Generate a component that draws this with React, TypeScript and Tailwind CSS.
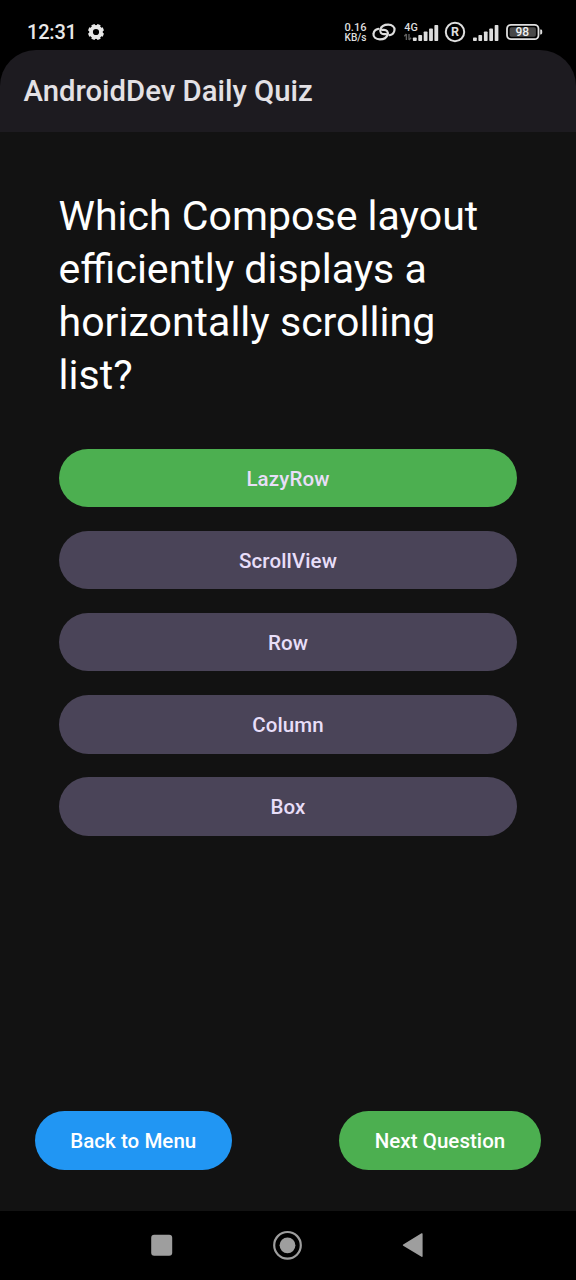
const answers = ['LazyRow', 'ScrollView', 'Row', 'Column', 'Box'];

function GearIcon() {
  return (
    <svg className="ml-3 size-4 shrink-0" viewBox="0 0 16 16" fill="none" stroke="#e8e8e8">
      <circle cx="8" cy="8" r="5" strokeWidth="3.8" />
      <g strokeWidth="3.5">
        <path d="M8 0v3M8 13v3M0 8h3M13 8h3" transform="rotate(22.5 8 8)" />
        <path d="M8 0v3M8 13v3M0 8h3M13 8h3" transform="rotate(-22.5 8 8)" />
      </g>
    </svg>
  );
}

function LinkIcon() {
  return (
    <svg className="ml-[4px] h-5 w-6 shrink-0" viewBox="0 0 24 20" fill="none" stroke="#dedede" strokeWidth="2.2" strokeLinecap="round">
      <path d="M14 12.2H12C9.3 12.2 7.6 10.2 8.4 7.4C9.3 4.4 12.6 2.7 16.2 2.7C20.2 2.7 22.9 5 22.5 8C22.2 10.9 20 12.8 17.6 13.2" />
      <path d="M10 7.8H12C14.7 7.8 16.4 9.8 15.6 12.6C14.7 15.6 11.4 17.3 7.8 17.3C3.8 17.3 1.1 15 1.5 12C1.8 9.1 4 7.2 6.4 6.8" />
    </svg>
  );
}

function MobileData() {
  return (
    <svg className="ml-2 h-5 w-[35px] shrink-0" viewBox="0 0 35 20">
      <text x="0.3" y="9" fill="#dedede" fontSize="10.8" fontFamily="Roboto, sans-serif" fontWeight="500">4G</text>
      <path d="M2.4 18v-6M.3 14.2L2.4 12M5 12v6M7.1 15.8L5 18" stroke="#606060" strokeWidth="1.4" fill="none" />
      <g fill="#dedede">
        <rect x="8.9" y="15.5" width="3.8" height="3.5" rx=".8" />
        <rect x="14.3" y="13" width="3.8" height="6" rx=".8" />
        <rect x="19.7" y="9.5" width="3.8" height="9.5" rx=".8" />
        <rect x="25.1" y="6.5" width="3.8" height="12.5" rx=".8" />
        <rect x="30.4" y="3" width="3.8" height="16" rx=".8" />
      </g>
    </svg>
  );
}

function SignalBars() {
  return (
    <svg className="ml-[6.5px] h-5 w-[26px] shrink-0" viewBox="0 0 26 20" fill="#dedede">
      <rect x="0" y="15.5" width="3.8" height="3.5" rx=".8" />
      <rect x="5.4" y="13" width="3.7" height="6" rx=".8" />
      <rect x="10.9" y="9.5" width="3.7" height="9.5" rx=".8" />
      <rect x="16.3" y="6.5" width="3.7" height="12.5" rx=".8" />
      <rect x="21.7" y="3" width="3.7" height="16" rx=".8" />
    </svg>
  );
}

function StatusBar() {
  return (
    <div className="flex h-[50px] shrink-0 items-center pt-[14px] pl-[27px]">
      <span className="w-[49px] whitespace-nowrap text-[20px] leading-5 tracking-[-0.2px] font-medium text-[#e8e8e8]">12:31</span>
      <GearIcon />
      <svg className="ml-[240px] h-[22px] w-6 shrink-0" viewBox="0 0 24 22" fill="#dedede" fontFamily="Roboto, sans-serif" fontWeight="500">
        <text x=".5" y="9.7" fontSize="10" textLength="22" lengthAdjust="spacingAndGlyphs">0.16</text>
        <text x=".5" y="20" fontSize="10" textLength="22" lengthAdjust="spacingAndGlyphs">KB/s</text>
      </svg>
      <LinkIcon />
      <MobileData />
      <svg className="ml-[5px] size-[22px] shrink-0" viewBox="0 0 22 22">
        <circle cx="11" cy="11" r="9.2" fill="none" stroke="#dedede" strokeWidth="2" />
        <text x="11" y="15.3" textAnchor="middle" fill="#dedede" fontSize="12.5" fontFamily="Roboto, sans-serif" fontWeight="700">R</text>
      </svg>
      <SignalBars />
      <svg className="ml-[7px] h-[18px] w-[37px] shrink-0" viewBox="0 0 37 18">
        <rect x="1" y="1.8" width="31.5" height="14.4" rx="4" fill="none" stroke="#dedede" strokeWidth="1.8" />
        <rect x="3.6" y="4.3" width="26.3" height="9.4" rx="1.8" fill="#484848" />
        <path d="M34.2 6.5h.6q1.4 0 1.4 1.4v2.2q0 1.4-1.4 1.4h-.6z" fill="#dedede" />
        <text x="16.3" y="13.3" textAnchor="middle" fill="#f0f0f0" fontSize="12" fontFamily="Roboto, sans-serif" fontWeight="500">98</text>
      </svg>
    </div>
  );
}

export default function App() {
  return (
    <div className="flex h-[1280px] w-[576px] flex-col overflow-hidden bg-black font-['Roboto',sans-serif]">
      <StatusBar />
      <header className="flex h-[82px] shrink-0 items-center rounded-t-[36px] bg-[#1d1b20] pl-[23.5px]">
        <h1 className="text-[29.3px] leading-10 font-medium text-[#e3e1e5]">AndroidDev Daily Quiz</h1>
      </header>
      <main className="flex flex-1 flex-col bg-[#121212] pt-[58.4px]">
        <h2 className="mx-[58.6px] text-[41.05px] leading-[52.8px] text-white">
          Which Compose layout efficiently displays a horizontally scrolling list?
        </h2>
        <div className="mx-[58.6px] mt-[47.1px] flex flex-col gap-[23.5px]">
          {answers.map((answer) => (
            <button
              key={answer}
              className={`h-[58.6px] rounded-full pt-[2px] text-[20.5px] font-medium tracking-[0.13px] text-[#e8def8] ${answer === 'LazyRow' ? 'bg-[#4caf50]' : 'bg-[#4a4458]'}`}
            >
              {answer}
            </button>
          ))}
        </div>
        <div className="mt-auto mb-[41px] flex justify-between px-[35px] text-[20.5px] font-medium tracking-[0.05px] text-white">
          <button className="h-[58.6px] w-[196.5px] rounded-full bg-[#2196f3] pt-px">Back to Menu</button>
          <button className="h-[58.6px] w-[202px] rounded-full bg-[#4caf50] pt-px">Next Question</button>
        </div>
      </main>
      <nav className="flex h-[69px] shrink-0 items-center bg-black pb-px pl-[151px]">
        <svg className="size-[22px]" viewBox="0 0 22 22">
          <rect x=".2" y=".8" width="21" height="21" rx="3" fill="#9e9e9e" />
        </svg>
        <svg className="ml-[99px] size-[30px]" viewBox="0 0 30 30">
          <circle cx="15.5" cy="15.3" r="13.3" fill="none" stroke="#9e9e9e" strokeWidth="2.2" />
          <circle cx="15.5" cy="15.3" r="7.9" fill="#9e9e9e" />
        </svg>
        <svg className="ml-[100px] h-[26px] w-[22px]" viewBox="0 0 22 26">
          <path d="M1.2 12.5L19.5 1.3Q20.6.8 20.6 2V24.1Q20.6 25.3 19.5 24.8L1.2 13.8Q.2 13.1 1.2 12.5Z" fill="#9e9e9e" />
        </svg>
      </nav>
    </div>
  );
}
